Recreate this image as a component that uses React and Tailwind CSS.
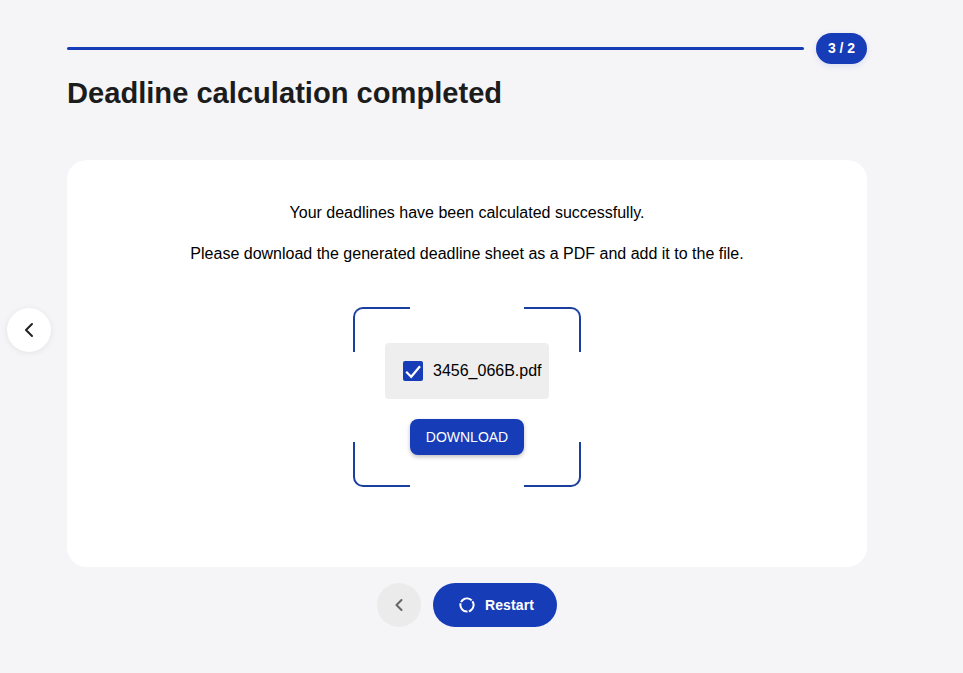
import React from "react";

const Corner = ({ className }) => (
  <span className={`absolute w-[57px] h-[45px] border-[#1a3f9f] ${className}`}></span>
);

const App = () => {
  return (
    <div className="relative min-h-[673px] bg-[#f5f5f8] font-['Liberation_Sans',Arial,sans-serif] text-black">
      {/* Boton lateral */}
      <button className="absolute left-[7px] top-[308px] w-11 h-11 rounded-full bg-white shadow-[0_1px_6px_rgba(0,0,0,0.08)] flex items-center justify-center">
        <svg width="24" height="24" viewBox="0 0 24 24" fill="none" stroke="#222" strokeWidth="2" strokeLinecap="round" strokeLinejoin="round">
          <path d="M15 6l-6 6 6 6" />
        </svg>
      </button>

      <div className="ml-[67px] w-[800px] pt-[33px]">
        {/* Progreso */}
        <div className="flex items-center gap-3 h-[31px]">
          <div className="flex-1 h-[3px] rounded-full bg-[#173cb8]"></div>
          <div className="w-[51px] h-[31px] rounded-full bg-[#173cb8] text-white text-[14px] font-bold flex items-center justify-center shadow-[0_2px_6px_rgba(23,60,184,0.12)]">
            3 / 2
          </div>
        </div>

        <h1 className="mt-[11px] text-[29.12px] leading-[36px] font-bold text-[#1c1c1c]">
          Deadline calculation completed
        </h1>

        {/* Tarjeta */}
        <div className="mt-[49px] h-[407px] rounded-[20px] bg-white flex flex-col items-center pt-[44px]">
          <p className="text-[16px] leading-[18px]">Your deadlines have been calculated successfully.</p>
          <p className="mt-[23px] text-[16px] leading-[18px]">
            Please download the generated deadline sheet as a PDF and add it to the file.
          </p>

          <div className="relative mt-[44px] w-[228px] h-[180px] flex flex-col items-center pt-[36px]">
            <Corner className="left-0 top-0 border-l-2 border-t-2 rounded-tl-[10px]" />
            <Corner className="right-0 top-0 border-r-2 border-t-2 rounded-tr-[10px]" />
            <Corner className="left-0 bottom-0 border-l-2 border-b-2 rounded-bl-[10px]" />
            <Corner className="right-0 bottom-0 border-r-2 border-b-2 rounded-br-[10px]" />

            <div className="w-[164px] h-[56px] rounded-[4px] bg-[#eeeeee] flex items-center pl-[18px] gap-[10px]">
              <span className="w-5 h-5 rounded-[2px] bg-[#173cb8] flex items-center justify-center">
                <svg width="20" height="20" viewBox="0 0 20 20" fill="none" stroke="#fff" strokeWidth="2.2">
                  <path d="M3.2 10.8l5 5L17 5.2" />
                </svg>
              </span>
              <span className="text-[16px]">3456_066B.pdf</span>
            </div>

            <button className="mt-[20px] w-[114px] h-[36px] rounded-[8px] bg-[#173cb8] text-white text-[14px] flex items-center justify-center shadow-[0_2px_4px_rgba(0,0,0,0.25)]">
              DOWNLOAD
            </button>
          </div>
        </div>

        {/* Navegacion */}
        <div className="mt-[16px] flex justify-center gap-3">
          <button className="w-11 h-11 rounded-full bg-[#ebebeb] flex items-center justify-center">
            <svg width="20" height="20" viewBox="0 0 24 24" fill="none" stroke="#666" strokeWidth="2.5" strokeLinecap="round" strokeLinejoin="round">
              <path d="M15 6l-6 6 6 6" />
            </svg>
          </button>
          <button className="w-[124px] h-11 rounded-full bg-[#173cb8] text-white text-[14px] tracking-[0.1px] font-bold flex items-center pl-[26px] gap-[10px]">
            <svg width="16" height="16" viewBox="0 0 16 16" fill="none" stroke="#fff" strokeWidth="2">
              <circle cx="8" cy="8" r="6.6" strokeDasharray="12.5 1.3" transform="rotate(-35 8 8)" />
            </svg>
            Restart
          </button>
        </div>
      </div>
    </div>
  );
};

export default App;
